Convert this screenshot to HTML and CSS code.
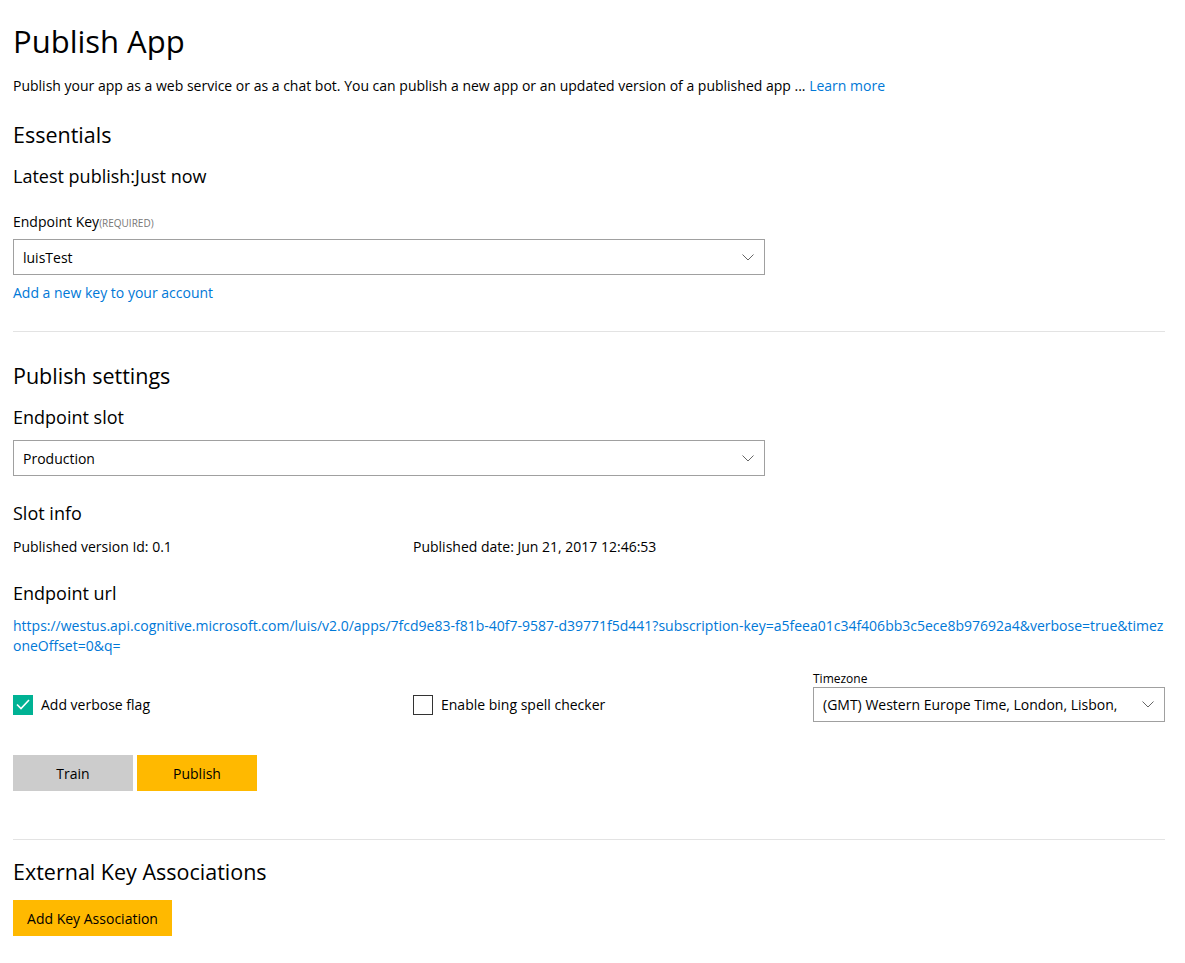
FILE: index.html
```html
<!DOCTYPE html>
<html lang="en">
<head>
<meta charset="utf-8">
<title>Publish App</title>
<link rel="stylesheet" href="styles.css">
</head>
<body>
<main class="page">
  <h1 class="title">Publish App</h1>
  <p class="desc">Publish your app as a web service or as a chat bot. You can publish a new app or an updated version of a published app ... <a class="link" href="#">Learn more</a></p>

  <h2 class="section">Essentials</h2>
  <div class="sub latest">Latest publish:Just now</div>
  <label class="field-label">Endpoint Key<span class="req">(REQUIRED)</span></label>
  <div class="select key-select">
    <span>luisTest</span>
    <svg class="chev" width="12" height="7" viewBox="0 0 12 7"><path d="M0.5 0.5 L6 6 L11.5 0.5" fill="none" stroke="#666" stroke-width="1"/></svg>
  </div>
  <a class="link add-key" href="#">Add a new key to your account</a>

  <hr class="divider first">

  <h2 class="section settings">Publish settings</h2>
  <div class="sub slot-title">Endpoint slot</div>
  <div class="select slot-select">
    <span>Production</span>
    <svg class="chev" width="12" height="7" viewBox="0 0 12 7"><path d="M0.5 0.5 L6 6 L11.5 0.5" fill="none" stroke="#666" stroke-width="1"/></svg>
  </div>

  <div class="sub slot-info">Slot info</div>
  <div class="info-row">
    <span>Published version Id: 0.1</span>
    <span>Published date: Jun 21, 2017 12:46:53</span>
  </div>

  <div class="sub url-title">Endpoint url</div>
  <a class="link url" href="#">https://westus.api.cognitive.microsoft.com/luis/v2.0/apps/7fcd9e83-f81b-40f7-9587-d39771f5d441?subscription-key=a5feea01c34f406bb3c5ece8b97692a4&amp;verbose=true&amp;timezoneOffset=0&amp;q=</a>

  <div class="options">
    <div class="check-item">
      <span class="box checked">
        <svg width="14" height="11" viewBox="0 0 14 11"><path d="M1 5.5 L5 9.5 L13 1" fill="none" stroke="#fff" stroke-width="1.6"/></svg>
      </span>
      <span>Add verbose flag</span>
    </div>
    <div class="check-item">
      <span class="box"></span>
      <span>Enable bing spell checker</span>
    </div>
    <div class="tz">
      <div class="tz-label">Timezone</div>
      <div class="select tz-select">
        <span>(GMT) Western Europe Time, London, Lisbon,</span>
        <svg class="chev" width="12" height="7" viewBox="0 0 12 7"><path d="M0.5 0.5 L6 6 L11.5 0.5" fill="none" stroke="#666" stroke-width="1"/></svg>
      </div>
    </div>
  </div>

  <div class="buttons">
    <button class="btn gray">Train</button>
    <button class="btn yellow">Publish</button>
  </div>

  <hr class="divider second">

  <h2 class="section ext">External Key Associations</h2>
  <button class="btn yellow add-assoc">Add Key Association</button>
</main>
</body>
</html>
```

FILE: styles.css
```css
* { box-sizing: border-box; }
html, body { margin: 0; padding: 0; background: #fff; }
body {
  font-family: "Open Sans", "Noto Sans", "DejaVu Sans", sans-serif;
  color: #000;
  font-size: 14px;
}
.page {
  width: 1152px;
  margin-left: 13px;
  display: flex;
  flex-direction: column;
  align-items: flex-start;
}
.title {
  margin: 21px 0 0;
  font-size: 31px;
  line-height: 40px;
  font-weight: 400;
}
.desc {
  margin: 15px 0 0;
  line-height: 20px;
  font-size: 14px;
}
.link { color: #0078d7; text-decoration: none; }
.section {
  margin: 24px 0 0;
  font-size: 21.5px;
  line-height: 30px;
  font-weight: 400;
}
.sub {
  font-size: 18px;
  line-height: 26px;
}
.latest { margin-top: 13px; }
.field-label {
  margin-top: 23px;
  line-height: 20px;
  font-size: 14px;
}
.req { font-size: 10px; color: #777; }
.select {
  width: 752px;
  height: 36px;
  border: 1px solid #a0a0a0;
  display: flex;
  align-items: center;
  justify-content: space-between;
  padding: 0 10px 0 9px;
  font-size: 14px;
}
.key-select { margin-top: 6px; }
.add-key { margin-top: 8px; line-height: 20px; font-size: 14px; }
.divider {
  width: 100%;
  margin: 0;
  border: 0;
  height: 1px;
  background: #e3e3e3;
}
.divider.first { margin-top: 28px; }
.section.settings { margin-top: 29px; }
.slot-title { margin-top: 13px; }
.slot-select { margin-top: 10px; }
.slot-info { margin-top: 24px; }
.info-row {
  margin-top: 11px;
  display: grid;
  grid-template-columns: 400px 400px;
  line-height: 20px;
  font-size: 14px;
}
.url-title { margin-top: 23px; }
.url {
  margin-top: 10px;
  line-height: 20px;
  width: 100%;
  word-break: break-all;
  font-size: 14px;
}
.options {
  margin-top: 15px;
  width: 100%;
  display: grid;
  grid-template-columns: 400px 400px 352px;
  align-items: end;
}
.check-item {
  display: flex;
  align-items: center;
  gap: 8px;
  height: 35px;
  font-size: 14px;
}
.box {
  width: 20px;
  height: 20px;
  border: 1px solid #333;
  display: flex;
  align-items: center;
  justify-content: center;
}
.box.checked { background: #00b294; border-color: #00b294; }
.tz-label { font-size: 12px; line-height: 16px; }
.tz-select { width: 352px; height: 35px; }
.buttons {
  margin-top: 33px;
  display: flex;
  gap: 4px;
}
.btn {
  font-family: inherit;
  font-size: 14px;
  color: #000;
  border: 0;
  height: 36px;
  padding: 0;
  width: 120px;
}
.btn.gray { background: #cccccc; }
.btn.yellow { background: #ffb900; }
.divider.second { margin-top: 48px; }
.section.ext { margin-top: 17px; }
.add-assoc { margin-top: 13px; width: 159px; }
```
